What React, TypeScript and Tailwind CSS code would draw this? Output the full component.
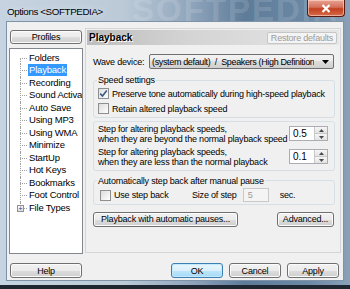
import React from "react";

const treeItems = [
  "Folders",
  "Playback",
  "Recording",
  "Sound Activation",
  "Auto Save",
  "Using MP3",
  "Using WMA",
  "Minimize",
  "StartUp",
  "Hot Keys",
  "Bookmarks",
  "Foot Control",
  "File Types",
];

const Button = ({
  children,
  className = "",
  focused = false,
}: {
  children: React.ReactNode;
  className?: string;
  focused?: boolean;
}) => (
  <div
    className={`flex items-center justify-center rounded-[3px] border ${
      focused
        ? "border-[#3c7fb1] bg-[linear-gradient(#eaf6fd_0%,#d9f0fc_50%,#bee6fd_50%,#a7d9f5_100%)] shadow-[inset_0_0_0_1px_#c4e8fc]"
        : "border-[#707070] bg-[linear-gradient(#f2f2f2_0%,#ebebeb_50%,#dddddd_50%,#cfcfcf_100%)] shadow-[inset_0_0_0_1px_#fbfbfb]"
    } whitespace-nowrap text-black ${className}`}
  >
    {children}
  </div>
);

const Checkbox = ({ checked = false }: { checked?: boolean }) => (
  <span className="flex h-[11px] w-[11px] shrink-0 items-center justify-center border border-[#8e8f8f] bg-[linear-gradient(135deg,#dcdcdc,#ffffff)]">
    {checked && (
      <svg width="9" height="9" viewBox="0 0 9 9">
        <path d="M1.2 4.6 L3.5 7 L7.8 1.6" fill="none" stroke="#3a5a86" strokeWidth="1.6" />
      </svg>
    )}
  </span>
);

const Spin = ({ value }: { value: string }) => (
  <div className="flex h-[15px] w-[39px] shrink-0 border border-[#abadb3] bg-white">
    <div className="flex flex-1 items-center pl-[3px] text-[10px] tracking-normal">{value}</div>
    <div className="flex w-[13px] flex-col border-l border-[#c8c8c8]">
      <div className="flex flex-1 items-center justify-center border-b border-[#c8c8c8] bg-[linear-gradient(#f6f6f6,#e2e2e2)]">
        <svg width="5" height="3" viewBox="0 0 5 3">
          <path d="M0 3 L2.5 0 L5 3 Z" fill="#4a4a4a" />
        </svg>
      </div>
      <div className="flex flex-1 items-center justify-center bg-[linear-gradient(#f6f6f6,#e2e2e2)]">
        <svg width="5" height="3" viewBox="0 0 5 3">
          <path d="M0 0 L2.5 3 L5 0 Z" fill="#4a4a4a" />
        </svg>
      </div>
    </div>
  </div>
);

export default function App() {
  return (
    <div className="relative h-[289px] w-[350px] overflow-hidden bg-[#1e2631] font-['Liberation_Sans',Arial,sans-serif] text-[9px] leading-[10px] tracking-[-0.2px] text-black">
      {/* Window frame */}
      <div className="flex h-[285px] w-[350px] flex-col bg-[linear-gradient(90deg,#c6d3e0_0%,#bccad8_35%,#8ea4bb_55%,#5e7b99_70%,#6b88a5_88%,#8ba1b7_100%)]">
        {/* Title bar */}
        <div className="relative flex h-[21px] shrink-0 items-center pl-[7px] pt-[3px]">
          <span className="text-[9.8px] tracking-[-0.4px] text-black [text-shadow:0_0_6px_#e8eef5]">
            Options &lt;SOFTPEDIA&gt;
          </span>
          <span className="pointer-events-none absolute left-[132px] top-[-7px] text-[33px] font-bold leading-[34px] tracking-[2px] text-white/15">
            SOFTPEDIA
          </span>
          <div className="absolute right-[5px] top-0 flex h-[17px] w-[38px] items-center justify-center rounded-b-[4px] border border-t-0 border-[#5a1a12] bg-[linear-gradient(#e8a493_0%,#d4705a_45%,#c2401f_55%,#d66a48_100%)] shadow-[inset_0_0_0_1px_rgba(255,220,210,0.6)]">
            <svg width="10" height="9" viewBox="0 0 10 9">
              <path d="M1.5 1 L8.5 8 M8.5 1 L1.5 8" stroke="#ffffff" strokeWidth="2.2" />
            </svg>
          </div>
        </div>

        {/* Client area */}
        <div className="mx-[6px] mb-[4px] flex flex-1 flex-col border border-[#7e93a8] bg-[#f0f0f0] px-[1px] pt-[6px]">
          <div className="flex">
            {/* Left column */}
            <div className="ml-[1px] mt-[2px] flex w-[74px] flex-col">
              <Button className="mx-[1px] h-[14px]">Profiles</Button>
              <div className="mt-[4px] h-[206px] overflow-hidden border border-[#828790] bg-white pt-[2.5px]">
                {treeItems.map((item, i) => {
                  const last = i === treeItems.length - 1;
                  const selected = item === "Playback";
                  return (
                    <div key={item} className="flex h-[12.5px] items-center whitespace-nowrap">
                      <div className="relative h-full w-[18px] shrink-0">
                        <span
                          className={`absolute left-[10px] border-l border-dotted border-[#a0a0a0] ${
                            i === 0 ? "top-1/2 bottom-0" : last ? "top-0 bottom-1/2" : "top-0 bottom-0"
                          }`}
                        />
                        <span className="absolute left-[10px] top-1/2 w-[7px] border-t border-dotted border-[#a0a0a0]" />
                        {last && (
                          <span className="absolute left-[7px] top-[3px] flex h-[7px] w-[7px] items-center justify-center border border-[#919191] bg-[linear-gradient(#ffffff,#dcdcdc)] text-[7px] leading-[5px] text-[#1f3a70]">
                            +
                          </span>
                        )}
                      </div>
                      <span className={`px-[1px] text-[9.5px] leading-[12px] ${selected ? "bg-[#3399ff] text-white" : ""}`}>
                        {item}
                      </span>
                    </div>
                  );
                })}
              </div>
            </div>

            {/* Right panel */}
            <div className="ml-[2px] flex h-[225px] w-[256px] flex-col border border-[#d5d5d5] bg-[#f0f0f0]">
              <div className="mx-[1px] mt-[1px] flex h-[15px] items-center justify-between bg-[linear-gradient(90deg,#bdbdbd_0%,#d4d4d4_40%,#e6e6e6_100%)] pl-[2px] pr-[2px]">
                <span className="text-[10px] font-bold tracking-normal [text-shadow:1px_1px_0_#ffffff]">Playback</span>
                <div className="flex h-[12px] w-[70px] items-center justify-center rounded-[2px] border border-[#c6c6c6] bg-[#f4f4f4] text-[#9a9a9a]">
                  Restore defaults
                </div>
              </div>

              <div className="ml-[7px] mr-[6px] mt-[9px] flex h-[15px] items-center">
                <span className="w-[56px] whitespace-nowrap">Wave device:</span>
                <div className="flex h-[15px] min-w-0 flex-1 items-center justify-between overflow-hidden rounded-[2px] border border-[#707070] bg-[linear-gradient(#f2f2f2_0%,#ebebeb_50%,#dddddd_50%,#cfcfcf_100%)] pl-[2px] pr-[4px]">
                  <span className="min-w-0 overflow-hidden whitespace-nowrap tracking-[-0.35px]">
                    (system default)&nbsp; /&nbsp; Speakers (High Definition
                  </span>
                  <svg width="7" height="4" viewBox="0 0 7 4" className="ml-[3px] shrink-0">
                    <path d="M0 0 L7 0 L3.5 4 Z" fill="#000" />
                  </svg>
                </div>
              </div>

              <fieldset className="ml-[7px] mr-[5px] mt-[5px] rounded-[3px] border border-[#d5dfe5] px-[4px] pb-[0.5px]">
                <legend className="ml-[-1px] px-[1px] leading-[12px]">Speed settings</legend>
                <div className="flex h-[15px] items-center gap-[3px] whitespace-nowrap">
                  <Checkbox checked />
                  <span>Preserve tone automatically during high-speed playback</span>
                </div>
                <div className="flex h-[15px] items-center gap-[3px] whitespace-nowrap">
                  <Checkbox />
                  <span>Retain altered playback speed</span>
                </div>
              </fieldset>

              <div className="ml-[7px] mr-[5px] mt-[3px] flex flex-col gap-[3px] rounded-[3px] border border-[#d5dfe5] pb-[3px] pl-[4px] pr-[6px] pt-[2px]">
                <div className="flex h-[20px] items-center justify-between whitespace-nowrap">
                  <span>
                    Step for altering playback speeds,
                    <br />
                    when they are beyond the normal playback speed
                  </span>
                  <Spin value="0.5" />
                </div>
                <div className="flex h-[20px] items-center justify-between whitespace-nowrap">
                  <span>
                    Step for altering playback speeds,
                    <br />
                    when they are less than the normal playback
                  </span>
                  <Spin value="0.1" />
                </div>
              </div>

              <fieldset className="ml-[7px] mr-[5px] mt-[4px] rounded-[3px] border border-[#d5dfe5] px-[6px]">
                <legend className="ml-[-3px] px-[1px] leading-[12px]">Automatically step back after manual pause</legend>
                <div className="flex h-[17px] items-center whitespace-nowrap">
                  <Checkbox />
                  <span className="ml-[3px] w-[78px]">Use step back</span>
                  <span>Size of step</span>
                  <div className="ml-[6px] flex h-[14px] w-[26px] items-center border border-[#c9c9c9] bg-[#f4f4f4] pl-[4px] text-[#9a9a9a]">
                    5
                  </div>
                  <span className="ml-[11px]">sec.</span>
                </div>
              </fieldset>

              <div className="ml-[7px] mr-[6px] mt-[7px] flex justify-between">
                <Button className="h-[15px] w-[145px]">Playback with automatic pauses...</Button>
                <Button className="h-[15px] w-[57px]">Advanced...</Button>
              </div>
            </div>
          </div>

          {/* Bottom buttons */}
          <div className="mt-[9px] flex">
            <Button className="ml-[2px] h-[15px] w-[72px]">Help</Button>
            <Button focused className="ml-[89px] h-[15px] w-[52px]">
              OK
            </Button>
            <Button className="ml-[6px] h-[15px] w-[52px]">Cancel</Button>
            <Button className="ml-[6px] h-[15px] w-[52px]">Apply</Button>
          </div>
        </div>
      </div>
    </div>
  );
}
